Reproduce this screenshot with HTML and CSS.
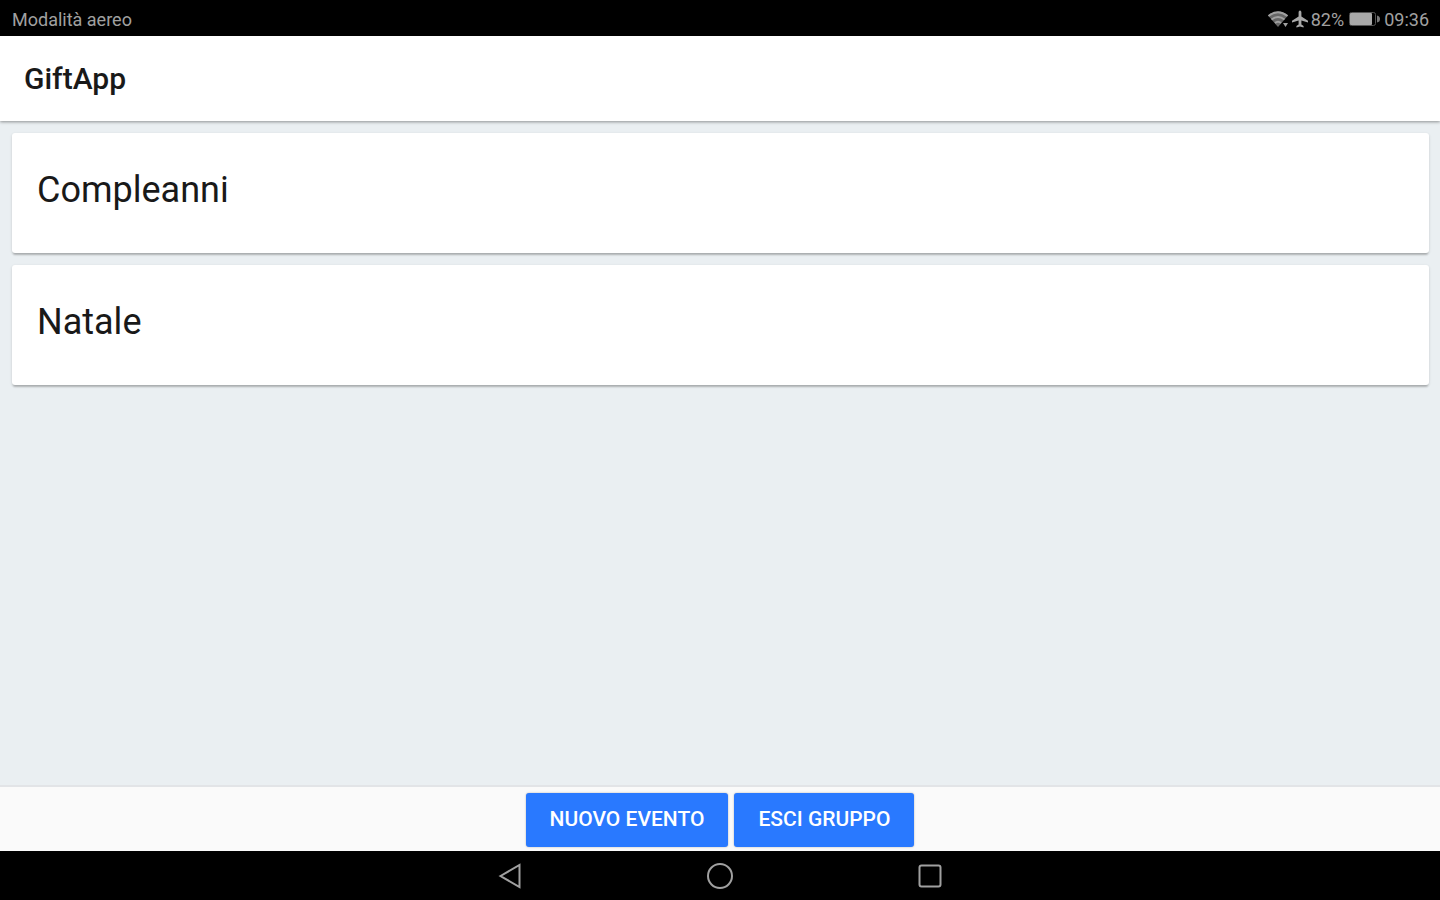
FILE: index.html
```html
<!DOCTYPE html>
<html lang="it">
<head>
  <meta charset="UTF-8" />
  <meta name="viewport" content="width=device-width, initial-scale=1.0" />
  <title>GiftApp</title>
  <link rel="stylesheet" href="styles.css">
</head>
<body>

  <div class="status-bar">
    <span>Modalità aereo</span>
    <div class="status-info">
      <!-- Wi-Fi -->
      <svg viewBox="0 0 22 18" width="22" height="18">
        <path d="M1 5.5Q11-2.5 21 5.5L11 17Z" fill="#666" />
        <path d="M1.5 6Q11-1.5 20.5 6M4.5 9.5Q11 4.5 17.5 9.5M8 13Q11 10.5 14 13" fill="none" stroke="#a0a0a0" stroke-width="2" />
        <path d="M16 13l2.5 4 2.5-4z" fill="#a0a0a0" />
      </svg>
      <!-- Aereo -->
      <svg viewBox="0 0 18 18" width="18" height="18">
        <path d="M9 0.5C8 0.5 7.6 1.6 7.6 2.6V6.6L1 10.8V12.6L7.6 10.6V14.4L5.4 16V17.4L9 16.4L12.6 17.4V16L10.4 14.4V10.6L17 12.6V10.8L10.4 6.6V2.6C10.4 1.6 10 0.5 9 0.5Z" fill="#a8a8a8" />
      </svg>
      <span>82%</span>
      <!-- Batteria -->
      <svg class="battery" viewBox="0 0 32 14" width="32" height="14">
        <rect x="0.5" y="0.5" width="26" height="13" rx="2" fill="none" stroke="#555" />
        <rect x="1" y="1" width="22" height="12" rx="1" fill="#a8a8a8" />
        <path d="M28 3.5Q31 4 31 7T28 10.5Z" fill="#777" />
      </svg>
      <span>09:36</span>
    </div>
  </div>

  <header>
    <h1>GiftApp</h1>
  </header>

  <main>
    <a class="card" href="#compleanni">Compleanni</a>
    <a class="card" href="#natale">Natale</a>
  </main>

  <footer>
    <button type="button">NUOVO EVENTO</button>
    <button type="button">ESCI GRUPPO</button>
  </footer>

  <nav>
    <button type="button" aria-label="Indietro">
      <svg viewBox="0 0 26 26" width="26" height="26">
        <path d="M3.5 13L22.5 2V24Z" />
      </svg>
    </button>
    <button type="button" aria-label="Home">
      <svg viewBox="0 0 26 26" width="26" height="26">
        <circle cx="13" cy="13" r="12" />
      </svg>
    </button>
    <button type="button" aria-label="Recenti">
      <svg viewBox="0 0 26 26" width="26" height="26">
        <rect x="2.5" y="2.5" width="21" height="21" rx="2" />
      </svg>
    </button>
  </nav>

</body>
</html>
```

FILE: styles.css
```css
:root {
  --sfondo: #eaeff2;
  --barra: #000000;
  --icone: #a0a0a0;
  --blu: #2979ff;
}

* {
  box-sizing: border-box;
}

body {
  font-family: Roboto, "Liberation Sans", sans-serif;
  background-color: var(--sfondo);
  color: #191919;
  margin: 0;
  min-height: 100vh;
  display: flex;
  flex-direction: column;
}

.status-bar {
  height: 36px;
  padding: 2px 11px 0 12px;
  display: flex;
  justify-content: space-between;
  align-items: center;
  background-color: var(--barra);
  color: var(--icone);
  font-size: 18px;
}

.status-info {
  display: flex;
  align-items: center;
  gap: 2px;
}

.battery {
  margin: 0 1px 0 3px;
}

header {
  height: 85px;
  padding: 0 24px;
  display: flex;
  align-items: center;
  background-color: #fff;
  box-shadow: 0 1px 3px rgba(0, 0, 0, 0.4);
}

h1 {
  margin: 0;
  font-size: 30px;
  font-weight: 500;
}

main {
  flex: 1;
  display: flex;
  flex-direction: column;
  gap: 12px;
  padding: 12px 11px 12px 12px;
}

.card {
  padding: 33px 25px 39px;
  background-color: #fff;
  border-radius: 3px;
  box-shadow: 0 3px 2px -1px rgba(0, 0, 0, 0.2), 0 1px 3px rgba(0, 0, 0, 0.14);
  color: #191919;
  font-size: 36px;
  line-height: 48px;
  text-decoration: none;
}

footer {
  display: flex;
  justify-content: center;
  gap: 6px;
  padding: 6px 0 4px;
  border-top: 2px solid #e2e4e7;
  background-color: #fafafa;
}

footer button {
  height: 54px;
  padding: 0 24px 3px;
  border: none;
  border-radius: 3px;
  background-color: var(--blu);
  box-shadow: 0 0 2px rgba(0, 0, 0, 0.3);
  color: #fff;
  font-family: inherit;
  font-size: 21px;
  font-weight: 500;
  cursor: pointer;
}

nav {
  height: 49px;
  display: flex;
  justify-content: center;
  align-items: center;
  gap: 184px;
  background-color: var(--barra);
}

nav button {
  display: flex;
  padding: 0;
  border: none;
  background: none;
  cursor: pointer;
}

nav svg {
  fill: none;
  stroke: var(--icone);
  stroke-width: 2;
}
```
